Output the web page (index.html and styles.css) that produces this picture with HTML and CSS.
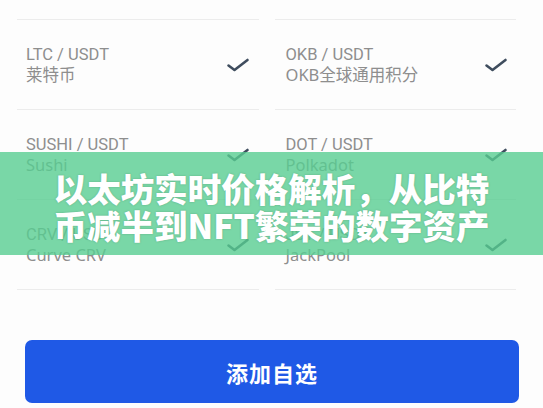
FILE: index.html
```html
<!DOCTYPE html>
<html lang="zh-CN">
<head>
    <meta charset="UTF-8">
    <meta name="viewport" content="width=device-width, initial-scale=1.0">
    <title>以太坊实时价格解析</title>
    <link rel="stylesheet" href="styles.css">
</head>
<body>

    <div class="page">
        <div class="pair-list">
            <div class="pair pair-top"></div>
            <div class="pair pair-top"></div>
            <div class="pair">
                <div class="pair-text">
                    <div class="pair-name">LTC / USDT</div>
                    <div class="pair-desc">莱特币</div>
                </div>
                <svg class="check" viewBox="0 0 24 16"><path d="M2.5 8.5 L8.5 13 L21.5 3"/></svg>
            </div>
            <div class="pair">
                <div class="pair-text">
                    <div class="pair-name">OKB / USDT</div>
                    <div class="pair-desc">OKB全球通用积分</div>
                </div>
                <svg class="check" viewBox="0 0 24 16"><path d="M2.5 8.5 L8.5 13 L21.5 3"/></svg>
            </div>
            <div class="pair">
                <div class="pair-text">
                    <div class="pair-name">SUSHI / USDT</div>
                    <div class="pair-desc">Sushi</div>
                </div>
                <svg class="check" viewBox="0 0 24 16"><path d="M2.5 8.5 L8.5 13 L21.5 3"/></svg>
            </div>
            <div class="pair">
                <div class="pair-text">
                    <div class="pair-name">DOT / USDT</div>
                    <div class="pair-desc">Polkadot</div>
                </div>
                <svg class="check" viewBox="0 0 24 16"><path d="M2.5 8.5 L8.5 13 L21.5 3"/></svg>
            </div>
            <div class="pair">
                <div class="pair-text">
                    <div class="pair-name">CRV / USDT</div>
                    <div class="pair-desc">Curve CRV</div>
                </div>
                <svg class="check" viewBox="0 0 24 16"><path d="M2.5 8.5 L8.5 13 L21.5 3"/></svg>
            </div>
            <div class="pair">
                <div class="pair-text">
                    <div class="pair-name">JST / USDT</div>
                    <div class="pair-desc">JackPool</div>
                </div>
                <svg class="check" viewBox="0 0 24 16"><path d="M2.5 8.5 L8.5 13 L21.5 3"/></svg>
            </div>
        </div>

        <button class="add-btn" type="button">添加自选</button>

        <div class="banner">以太坊实时价格解析，从比特<br>币减半到NFT繁荣的数字资产</div>
    </div>

</body>
</html>
```

FILE: styles.css
```css
body {
    margin: 0;
    background-color: #fdfdfd;
    font-family: Roboto, "Noto Sans", "Noto Sans CJK SC", sans-serif;
    overflow: hidden;
}
.page {
    position: relative;
    width: 543px;
    height: 408px;
    overflow: hidden;
}
.pair-list {
    display: grid;
    grid-template-columns: 1fr 1fr;
    column-gap: 16px;
    padding: 0 27px 0 17px;
}
.pair {
    display: flex;
    align-items: center;
    justify-content: space-between;
    height: 89px;
    padding: 0 9px 0 9px;
    border-bottom: 1px solid #ececec;
}
.pair-top {
    height: 19px;
}
.pair:nth-child(even) {
    padding: 0 8px 0 11px;
}
.pair-name,
.pair-desc {
    font-size: 16.5px;
    line-height: 20px;
    color: #8e8e8e;
}
.pair-desc {
    font-family: "Noto Sans", "Noto Sans CJK SC", sans-serif;
}
.check {
    width: 24px;
    height: 16px;
    fill: none;
    stroke: #3f4d5e;
    stroke-width: 2.6;
    stroke-linecap: round;
    stroke-linejoin: round;
}
.add-btn {
    display: block;
    width: 494px;
    height: 63px;
    margin: 50px 0 0 25px;
    border: none;
    border-radius: 7px;
    background-color: #1f59e6;
    color: #fff;
    font-family: "Noto Sans CJK SC", sans-serif;
    font-size: 22px;
    font-weight: 700;
    letter-spacing: 1px;
}
.banner {
    position: absolute;
    left: 0;
    right: 0;
    top: 152px;
    height: 103px;
    box-sizing: border-box;
    padding-top: 5px;
    display: flex;
    align-items: center;
    justify-content: center;
    text-align: center;
    background-color: rgba(88, 205, 145, 0.8);
    color: #fff;
    font-family: "Noto Sans CJK SC", sans-serif;
    font-size: 33.5px;
    font-weight: 900;
    line-height: 37px;
    text-shadow: 0 0 2px rgba(40, 90, 60, 0.35);
}
```
